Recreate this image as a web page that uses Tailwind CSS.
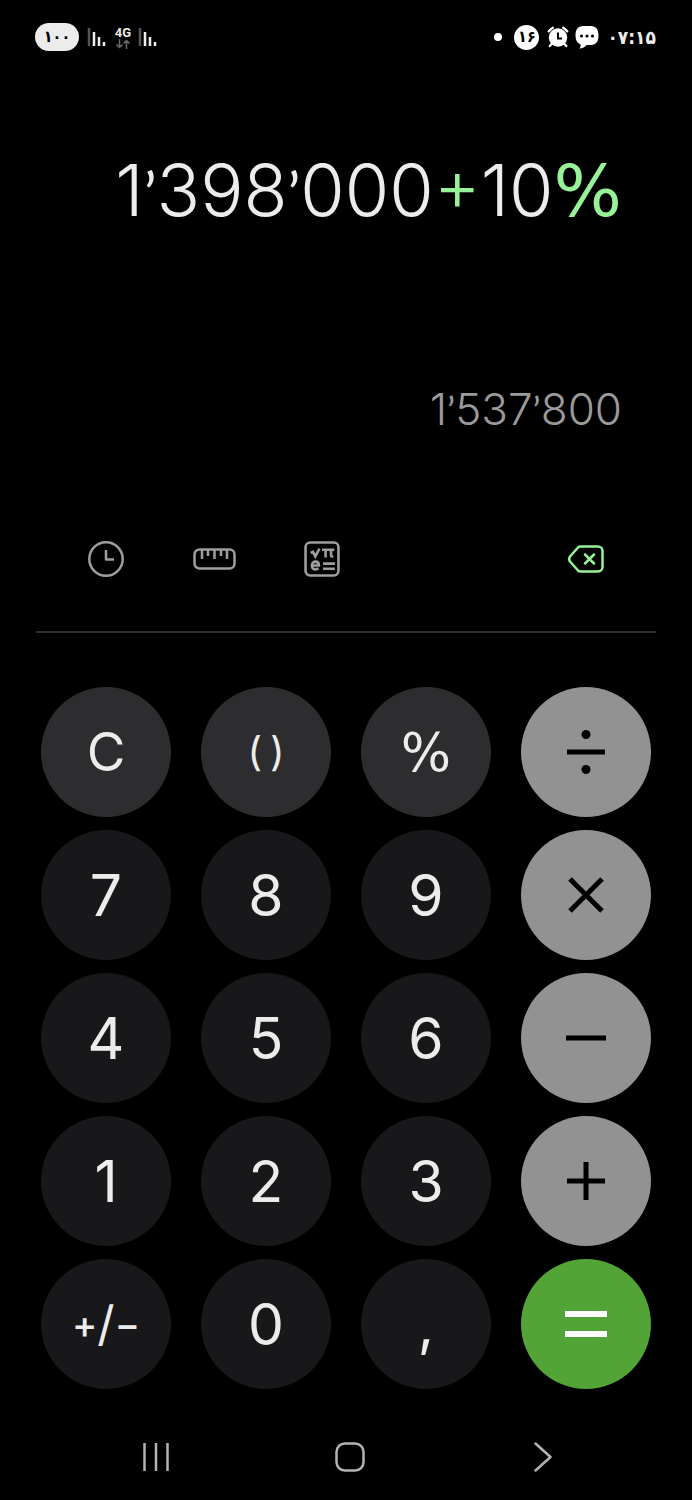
<!DOCTYPE html>
<html lang="fa">
<head>
  <meta charset="UTF-8" />
  <meta name="viewport" content="width=device-width, initial-scale=1.0"/>
  <title>Calculator</title>
  <script src="https://cdn.jsdelivr.net/npm/@tailwindcss/browser@4"></script>
</head>
<body class="bg-black text-[#ececec] min-h-screen font-['Inter','DejaVu_Sans',sans-serif]">

  <!-- Status bar -->
  <header class="flex items-center justify-between pt-[22px] pl-[35px] pr-[36px]">
    <div class="flex items-center h-[30px]">
      <span class="flex items-center justify-center w-11 h-7 rounded-full bg-[#ececec] text-black text-base font-bold font-['DejaVu_Sans_Condensed','DejaVu_Sans',sans-serif]">۱۰۰</span>
      <svg class="ml-2 w-[20px] h-[20px]" viewBox="0 0 20 20" fill="none" stroke-width="2.500">
        <path d="M2 1v18" stroke="#555"/>
        <path d="M7 5v14M12 10v9M17 15v4" stroke="#eee"/>
      </svg>
      <span class="flex flex-col items-center w-5 ml-[6px]">
        <span class="text-[13px] leading-[13px] font-bold font-['Roboto',sans-serif]">4G</span>
        <svg class="w-4 h-[10px]" viewBox="0 0 16 10" fill="none" stroke="#6a6a6a" stroke-width="1.500">
          <path d="M4.500 0v8.500M1.500 5.500l3 3 3-3M11.500 10V1.500M8.500 4.500l3-3 3 3"/>
        </svg>
      </span>
      <svg class="ml-[5px] w-[20px] h-[20px]" viewBox="0 0 20 20" fill="none" stroke-width="2.500">
        <path d="M2 1v18" stroke="#555"/>
        <path d="M7 5v14M12 10v9M17 15v4" stroke="#eee"/>
      </svg>
    </div>
    <div class="flex items-center h-[30px]">
      <span class="w-2 h-2 rounded-full bg-white"></span>
      <span class="flex items-center justify-center w-[25px] h-[25px] ml-3 rounded-full bg-white text-black text-base font-bold font-['DejaVu_Sans_Condensed','DejaVu_Sans',sans-serif]">۱۶</span>
      <svg class="ml-2 w-[22px] h-[22px]" viewBox="0 0 22 22" fill="none">
        <path d="M5 17.500L2.800 20M17 17.500l2.200 2.500M1.800 5.200a14 14 0 0 1 4-3.400M20.200 5.200a14 14 0 0 0-4-3.400" stroke="#fff" stroke-width="2.400" stroke-linecap="round"/>
        <circle cx="11" cy="11.500" r="9.200" fill="#fff"/>
        <path d="M11 6.500v6h4" stroke="#000" stroke-width="2"/>
      </svg>
      <svg class="ml-[6px] w-6 h-6" viewBox="0 0 24 24">
        <path d="M8 1h8c5 0 7.500 3.500 7.500 9.500S21 20 16 20h-4.500c-1.500 2-4 3.500-7 3.500 1-1.200 1.300-2.500 1-4C2 18 .5 15 .5 10.500.5 4.500 3 1 8 1z" fill="#fff"/>
        <circle cx="6.500" cy="11" r="1.600"/><circle cx="12" cy="11" r="1.600"/><circle cx="17.500" cy="11" r="1.600"/>
      </svg>
      <span class="ml-2 text-[19px] font-bold font-['DejaVu_Sans_Condensed','DejaVu_Sans',sans-serif]">۰۷:۱۵</span>
    </div>
  </header>

  <main>
    <!-- Display -->
    <div class="flex flex-col items-end px-[70px] whitespace-nowrap">
      <output class="mt-[98px] text-[72px] leading-[80px] font-light">1<span class="text-[60px] leading-none font-normal font-['Lato',sans-serif]">’</span>398<span class="text-[60px] leading-none font-normal font-['Lato',sans-serif]">’</span>000<span class="text-[#98f298]">+</span>10<span class="text-[#98f298] leading-none font-normal font-['DejaVu_Sans',sans-serif]">%</span></output>
      <output class="mt-[151px] text-[44px] leading-[56px] font-light text-[#9a9a9a]">1<span class="text-[38px] leading-none font-normal font-['Lato',sans-serif]">’</span>537<span class="text-[38px] leading-none font-normal font-['Lato',sans-serif]">’</span>800</output>
    </div>

    <!-- Tools -->
    <div class="flex items-center gap-[60px] mt-[98px] px-[82px] text-[#9e9ea0]">
      <button aria-label="History" class="flex items-center justify-center w-12 h-12">
        <svg class="w-9 h-9" viewBox="0 0 36 36" fill="none" stroke="currentColor" stroke-width="2.500">
          <circle cx="18" cy="18" r="16.700"/>
          <path d="M18 9v9.500h8" stroke-linejoin="round"/>
        </svg>
      </button>
      <button aria-label="Unit converter" class="flex items-center justify-center w-12 h-12">
        <svg class="w-[43px] h-[22px]" viewBox="0 0 43 22" fill="none" stroke="currentColor" stroke-width="2.500">
          <rect x="1.500" y="1.500" width="40" height="19" rx="5"/>
          <path d="M9 2v9M15 2v6M21.500 2v9M28 2v6M34 2v9"/>
        </svg>
      </button>
      <button aria-label="Scientific" class="flex items-center justify-center w-12 h-12">
        <svg class="w-[36px] h-[36px]" viewBox="0 0 35 35" fill="none" stroke="currentColor" stroke-width="2.500">
          <rect x="1.500" y="1.500" width="32" height="32" rx="4.500"/>
          <path d="M6.500 11.500l2.200-1 2.300 4.500 4-7.500M17.500 8.500h12M21 9v7M26.300 9v5q0 1.200 2.200 1"/>
          <path d="M8 23.800h6.500c0-5-6.800-5-6.800 0 0 4.200 4 4.700 6.300 2.800M18.500 22H30M18.500 27H30"/>
        </svg>
      </button>
      <button aria-label="Delete" class="flex items-center justify-center w-12 h-12 ml-auto text-[#98f298]">
        <svg class="w-9 h-7" viewBox="0 0 36 28" fill="none" stroke="currentColor" stroke-width="2.500" stroke-linejoin="round" stroke-linecap="round">
          <path d="M12.500 1.500H30a4.500 4.500 0 0 1 4.500 4.500v16a4.500 4.500 0 0 1-4.500 4.500H12.500q-1.500 0-2.500-1L2 16.500q-1.500-2.500 0-5L10 2.500q1-1 2.500-1z"/>
          <path d="M17 9.500l9 9M26 9.500l-9 9"/>
        </svg>
      </button>
    </div>

    <hr class="mt-12 mx-9 border-t-2 border-[#2e2e2e]"/>

    <!-- Keypad -->
    <div class="grid grid-cols-4 gap-x-[30px] gap-y-[13px] mt-[54px] px-[41px] text-[57px] leading-none">
      <button class="aspect-square rounded-full bg-[#2d2d2f] text-[53px]">C</button>
      <button aria-label="( )" class="flex items-center justify-center gap-2 aspect-square rounded-full bg-[#2d2d2f] text-[40px]"><span>(</span><span>)</span></button>
      <button class="aspect-square rounded-full bg-[#2d2d2f] text-[53px] font-['DejaVu_Sans',sans-serif]">%</button>
      <button aria-label="÷" class="flex items-center justify-center aspect-square rounded-full bg-[#929292]">
        <svg class="w-11 h-11" viewBox="0 0 44 44">
          <path d="M3 22h38" stroke="#000" stroke-width="5"/>
          <circle cx="22" cy="4.500" r="4.500"/><circle cx="22" cy="39.500" r="4.500"/>
        </svg>
      </button>

      <button class="aspect-square rounded-full bg-[#18181a]">7</button>
      <button class="aspect-square rounded-full bg-[#18181a]">8</button>
      <button class="aspect-square rounded-full bg-[#18181a]">9</button>
      <button aria-label="×" class="flex items-center justify-center aspect-square rounded-full bg-[#929292]">
        <svg class="w-11 h-11" viewBox="0 0 44 44"><path d="M6 6l32 32M38 6L6 38" stroke="#000" stroke-width="5"/></svg>
      </button>

      <button class="aspect-square rounded-full bg-[#18181a]">4</button>
      <button class="aspect-square rounded-full bg-[#18181a]">5</button>
      <button class="aspect-square rounded-full bg-[#18181a]">6</button>
      <button aria-label="−" class="flex items-center justify-center aspect-square rounded-full bg-[#929292]">
        <svg class="w-11 h-11" viewBox="0 0 44 44"><path d="M2 22h40" stroke="#000" stroke-width="5"/></svg>
      </button>

      <button class="aspect-square rounded-full bg-[#18181a]">1</button>
      <button class="aspect-square rounded-full bg-[#18181a]">2</button>
      <button class="aspect-square rounded-full bg-[#18181a]">3</button>
      <button aria-label="+" class="flex items-center justify-center aspect-square rounded-full bg-[#929292]">
        <svg class="w-11 h-11" viewBox="0 0 44 44"><path d="M3 22h38M22 3v38" stroke="#000" stroke-width="5"/></svg>
      </button>

      <button aria-label="+/−" class="flex items-center justify-center aspect-square rounded-full bg-[#18181a] text-[38px] font-medium"><span>+</span><span class="text-[48px] font-normal">/</span><span>−</span></button>
      <button class="aspect-square rounded-full bg-[#18181a]">0</button>
      <button class="aspect-square rounded-full bg-[#18181a]">,</button>
      <button aria-label="=" class="flex items-center justify-center aspect-square rounded-full bg-[#53a436]">
        <svg class="w-11 h-11" viewBox="0 0 44 44"><path d="M1 12h42M1 32h42" stroke="#fff" stroke-width="6"/></svg>
      </button>
    </div>
  </main>

  <!-- Navigation bar -->
  <nav class="flex items-center justify-between mt-12 pl-[132px] pr-[125px] text-[#b4b4b4]">
    <button aria-label="Recents" class="flex items-center justify-center w-12 h-10">
      <svg class="w-7 h-7" viewBox="0 0 28 28" stroke="currentColor" stroke-width="2.500"><path d="M2.500 0v28M14 0v28M25.500 0v28"/></svg>
    </button>
    <button aria-label="Home" class="flex items-center justify-center w-12 h-10">
      <svg class="w-[30px] h-[30px]" viewBox="0 0 30 30" fill="none" stroke="currentColor" stroke-width="2.500"><rect x="1.500" y="1.500" width="27" height="27" rx="8.500"/></svg>
    </button>
    <button aria-label="Back" class="flex items-center justify-center w-12 h-10">
      <svg class="w-[18px] h-[30px]" viewBox="0 0 18 30" fill="none" stroke="currentColor" stroke-width="2.500" stroke-linecap="round" stroke-linejoin="round"><path d="M1.500 1.500L16.500 15l-15 13.500"/></svg>
    </button>
  </nav>

</body>
</html>
